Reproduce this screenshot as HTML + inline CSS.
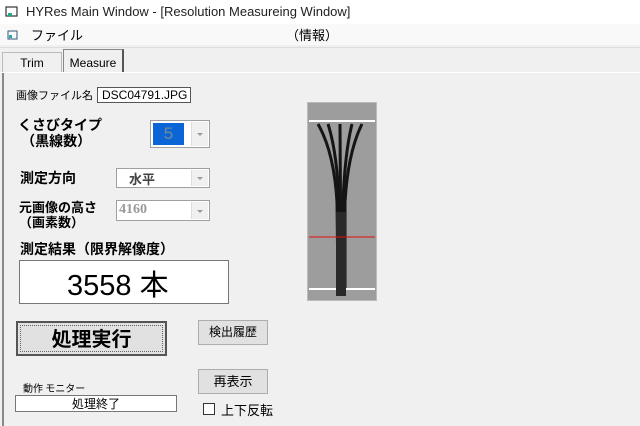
<!DOCTYPE html>
<html><head><meta charset="utf-8"><style>
body{margin:0;width:640px;height:426px;background:#f0f0f0;font-family:"Liberation Sans","Noto Sans CJK JP",sans-serif;position:relative;overflow:hidden;color:#000}
.a{position:absolute;white-space:nowrap}
.jp{font-family:"Noto Sans CJK JP",sans-serif}
.combo{position:absolute;background:#fff;border:1px solid #a0a0a0;box-sizing:border-box}
.arr{position:absolute;right:1px;top:1px;bottom:1px;width:16px;background:#f0f0f0;border-left:1px solid #ddd}
.arr:after{content:"";position:absolute;left:5px;top:45%;border:3px solid transparent;border-top:3px solid #999}
.btn{position:absolute;background:#e1e1e1;border:1px solid #adadad;box-sizing:border-box;text-align:center;font-family:"Noto Sans CJK JP",sans-serif}
</style></head><body>
<div class="a" style="left:0;top:0;width:640px;height:24px;background:#fff"></div>
<svg class="a" style="left:5px;top:5px" width="14" height="13"><rect x="1" y="2" width="11" height="9" fill="none" stroke="#333" stroke-width="1.2"/><rect x="3" y="8" width="4" height="3" fill="#2a8"/></svg>
<div class="a" style="left:26px;top:4px;font-size:13px;color:#222">HYRes Main Window - [Resolution Measureing Window]</div>
<div class="a" style="left:0;top:24px;width:640px;height:21px;background:#f9f9f9"></div>
<svg class="a" style="left:7px;top:29px" width="13" height="12"><rect x="1" y="2" width="9" height="8" fill="none" stroke="#357" stroke-width="1"/><rect x="2" y="6" width="3" height="3" fill="#2aa"/></svg>
<div class="a jp" style="left:31px;top:25px;font-size:13px">ファイル</div>
<div class="a jp" style="left:286px;top:25px;font-size:13px">（情報）</div>
<div class="a" style="left:0;top:47px;width:640px;height:1px;background:#ddd"></div>
<div class="a" style="left:2px;top:52px;width:60px;height:21px;border:1px solid #bbb;border-bottom:none;box-sizing:border-box;text-align:center;font-size:12px;line-height:20px">Trim</div>
<div class="a" style="left:63px;top:49px;width:61px;height:24px;border:1px solid #888;border-bottom:none;border-right:2px solid #555;box-sizing:border-box;text-align:center;font-size:12px;line-height:26px;background:#f0f0f0">Measure</div>
<div class="a" style="left:0;top:72px;width:640px;height:1px;background:#fff"></div>
<div class="a" style="left:2px;top:73px;width:2px;height:353px;background:#888"></div>
<div class="a jp" style="left:16px;top:87px;font-size:11px">画像ファイル名</div>
<div class="a" style="left:97px;top:87px;width:94px;height:16px;border:1px solid #555;background:#fff;box-sizing:border-box;font-size:12px;line-height:14px;padding-left:4px">DSC04791.JPG</div>
<div class="a jp" style="left:18px;top:117px;font-size:14px;font-weight:bold;line-height:16px">くさびタイプ<br>&nbsp;（黒線数）</div>
<div class="combo" style="left:150px;top:120px;width:60px;height:28px"><div class="a" style="left:2px;top:2px;width:31px;height:22px;background:#0a66d6;color:#789;font-size:17px;text-align:center;line-height:22px">5</div><div class="arr"></div></div>
<div class="a jp" style="left:20px;top:168px;font-size:14px;font-weight:bold">測定方向</div>
<div class="combo" style="left:116px;top:168px;width:94px;height:20px"><div class="a jp" style="left:12px;top:0;font-size:13px;font-weight:bold;color:#444">水平</div><div class="arr"></div></div>
<div class="a jp" style="left:19px;top:199px;font-size:13px;font-weight:bold;line-height:15px">元画像の高さ<br>（画素数）</div>
<div class="combo" style="left:116px;top:200px;width:94px;height:21px"><div class="a" style="left:2px;top:1px;font-size:14px;font-family:'Liberation Serif',serif;font-weight:bold;color:#999">4160</div><div class="arr"></div></div>
<div class="a jp" style="left:20px;top:239px;font-size:14px;font-weight:bold">測定結果（限界解像度）</div>
<div class="a" style="left:19px;top:260px;width:210px;height:44px;background:#fff;border:1px solid #777;box-sizing:border-box"></div>
<div class="a" style="left:67px;top:262px;font-size:29px">3558 <span class="jp">本</span></div>
<div class="a" style="left:307px;top:102px;width:70px;height:199px;background:#9d9d9d;border:1px solid #bbb;box-sizing:border-box"></div>
<div class="a" style="left:309px;top:120px;width:66px;height:2px;background:#fff"></div>
<div class="a" style="left:309px;top:288px;width:66px;height:2px;background:#fff"></div>
<svg class="a" style="left:307px;top:102px" width="70" height="199">
<g fill="none" stroke="#151515" stroke-width="3">
<path d="M11 22 Q27 50 30 100 L31 186"/><path d="M21 22 Q30 50 32 100 L33 186"/><path d="M33 22 L34 186"/><path d="M45 22 Q38 50 36 100 L36 186"/><path d="M55 22 Q41 50 38 100 L38 186"/>
</g>
<rect x="29" y="110" width="10" height="84" fill="#2a2a2a"/>
<line x1="2" y1="135" x2="68" y2="135" stroke="#e01010" stroke-width="1"/>
</svg>
<div class="btn" style="left:16px;top:321px;width:151px;height:35px;border:2px solid #555;font-size:20px;font-weight:bold;line-height:30px"><div style="position:absolute;inset:2px;border:1px dotted #666"></div>処理実行</div>
<div class="btn" style="left:198px;top:320px;width:70px;height:25px;font-size:12px;line-height:22px">検出履歴</div>
<div class="btn" style="left:198px;top:369px;width:70px;height:25px;font-size:13px;line-height:22px">再表示</div>
<div class="a jp" style="left:23px;top:380px;font-size:10px">動作 モニター</div>
<div class="a jp" style="left:15px;top:395px;width:162px;height:17px;background:#fff;border:1px solid #777;box-sizing:border-box;text-align:center;font-size:12px;line-height:15px">処理終了</div>
<div class="a" style="left:203px;top:403px;width:12px;height:12px;border:1px solid #333;background:#fff;box-sizing:border-box"></div>
<div class="a jp" style="left:221px;top:400px;font-size:13px">上下反転</div>
</body></html>
